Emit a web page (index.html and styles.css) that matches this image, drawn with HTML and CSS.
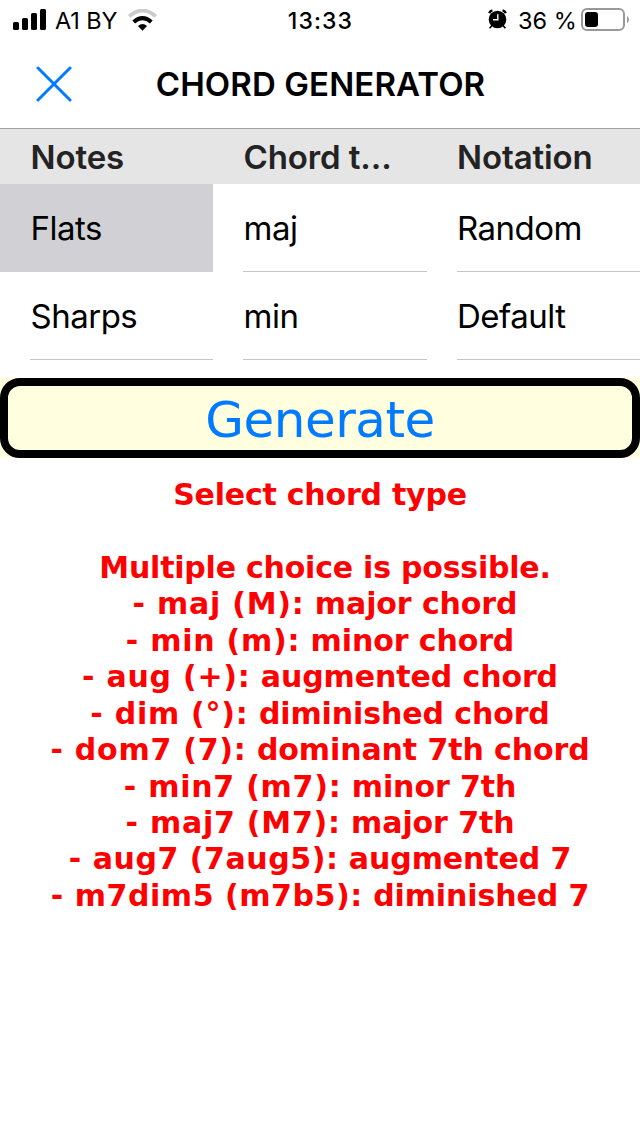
FILE: index.html
```html
<!DOCTYPE html>
<html lang="en">
<head>
<meta charset="utf-8">
<title>Chord Generator</title>
<link rel="stylesheet" href="styles.css">
</head>
<body>
<div class="status">
  <div class="status-left">
    <svg class="signal" width="34" height="22" viewBox="0 0 34 22"><rect x="0" y="13" width="6" height="8" rx="1.6"/><rect x="9" y="9" width="6" height="12" rx="1.6"/><rect x="18" y="4" width="6" height="17" rx="1.6"/><rect x="27" y="0" width="6" height="21" rx="1.6"/></svg>
    <span class="carrier">A1 BY</span>
    <svg class="wifi" width="30" height="22" viewBox="0 0 30 22"><path d="M1.2 7.4Q14.5-4.2 27.8 7.4" fill="none" stroke="#cbcbcb" stroke-width="3.6"/><path d="M5.7 12.9Q14.5 5.2 23.3 12.9" fill="none" stroke="#000" stroke-width="4"/><path d="M10 17Q14.5 13.2 19 17L14.5 21.7Z"/></svg>
  </div>
  <span class="time">13:33</span>
  <div class="status-right">
    <svg class="alarm" width="20" height="20" viewBox="0 0 20 20"><circle cx="9.5" cy="10.5" r="8.8"/><path d="M1.2 4.2Q2 2 4.4 1.4M17.8 4.2Q17 2 14.6 1.4" fill="none" stroke="#000" stroke-width="2.4"/><path d="M4 16.5L1.6 19.3M15 16.5L17.4 19.3" stroke="#000" stroke-width="1.6"/><path d="M9.8 5.2V10.8H5" fill="none" stroke="#fff" stroke-width="1.4"/></svg>
    <span class="percent">36 %</span>
    <svg class="battery" width="48" height="24" viewBox="0 0 48 24"><rect x="1" y="1" width="42" height="21" rx="5" fill="none" stroke="#999" stroke-width="2"/><rect x="4" y="4" width="13" height="15" rx="3"/><path d="M46 8Q48 9 48 11.5T46 15Z" fill="#999"/></svg>
  </div>
</div>
<header class="navbar">
  <svg class="close" width="36" height="36" viewBox="0 0 36 36"><path d="M2 2L34 34M34 2L2 34" stroke="#007aff" stroke-width="3" stroke-linecap="round"/></svg>
  <h1 class="title">CHORD GENERATOR</h1>
</header>
<main>
  <section class="lists">
    <div class="column"><h2 class="heading">Notes</h2><div class="row selected">Flats</div><div class="row">Sharps</div></div>
    <div class="column"><h2 class="heading">Chord t...</h2><div class="row">maj</div><div class="row">min</div></div>
    <div class="column"><h2 class="heading">Notation</h2><div class="row">Random</div><div class="row">Default</div></div>
  </section>
  <div class="action"><button class="generate">Generate</button></div>
  <section class="help">
    <p class="intro">Select chord type</p>
    <p>&nbsp;</p>
    <p class="intro trailing">Multiple choice is possible.</p>
    <p class="trailing"><span class="term">- maj (M):</span> major chord</p>
    <p><span class="term">- min (m):</span> minor chord</p>
    <p><span class="term">- aug (+):</span> augmented chord</p>
    <p><span class="term">- dim (°):</span> diminished chord</p>
    <p><span class="term">- dom7 (7):</span> dominant 7th chord</p>
    <p><span class="term">- min7 (m7):</span> minor 7th</p>
    <p><span class="term">- maj7 (M7):</span> major 7th</p>
    <p><span class="term long">- aug7 (7aug5):</span> augmented 7</p>
    <p><span class="term long">- m7dim5 (m7b5):</span> diminished 7</p>
  </section>
</main>
</body>
</html>
```
FILE: styles.css
```css
* { box-sizing: border-box; }
body { margin: 0; width: 640px; height: 1136px; background: #fff; color: #000; font-family: Inter, "Liberation Sans", sans-serif; overflow: hidden; }
svg { display: block; flex: none; }
h1, h2, p { margin: 0; }
.status { height: 40px; display: grid; grid-template-columns: 1fr auto 1fr; line-height: 41px; white-space: nowrap; }
.status-left { display: flex; padding-left: 13px; }
.signal { margin-top: 9px; }
.carrier { width: 64px; margin-left: 8px; font-size: 23.5px; letter-spacing: -0.1px; }
.wifi { margin: 9px 0 0 9px; }
.time { padding-left: 1px; font-weight: 500; font-size: 23px; line-height: 42px; letter-spacing: 1.1px; }
.status-right { display: flex; justify-content: flex-end; padding-right: 11px; }
.alarm { margin: 9px 10px 0 0; }
.percent { width: 58px; font-size: 23.5px; }
.battery { margin: 8px 0 0 5px; }
.navbar { height: 89px; display: grid; grid-template-columns: 120px 400px 120px; align-items: center; border-bottom: 1px solid #a0a0a0; }
.close { margin-left: 36px; }
.title { padding-left: 1px; text-align: center; font-size: 33px; font-weight: 600; line-height: 40px; white-space: nowrap; letter-spacing: 0.1px; }
.lists { display: grid; grid-template-columns: 213px 213.5px 213.5px; }
.column { white-space: nowrap; min-width: 0; }
.heading { height: 55px; padding-left: 30.5px; background: #e5e5e5; color: #232323; font-size: 33px; font-weight: 600; line-height: 56px; letter-spacing: -0.1px; }
.row { height: 88px; padding-left: 30.5px; font-size: 33px; line-height: 89px; letter-spacing: -0.5px; background: linear-gradient(#c5c5c7, #c5c5c7) 30px 87px / 100% 1px no-repeat; }
.row.selected { background: #d1d0d5; }
.action { margin-top: 18px; height: 80px; background: #ffffe0; }
.generate { display: block; width: 100%; height: 80px; padding: 5px 0 0; border: 8px solid #000; border-radius: 20px; background: #ffffe0; color: #007aff; font: 50px/59px "DejaVu Sans", sans-serif; letter-spacing: -0.5px; }
.help { padding-top: 18.9px; text-align: center; color: #f00; font: bold 30px/36.46px "DejaVu Sans", sans-serif; letter-spacing: -0.1px; white-space: nowrap; }
.intro { letter-spacing: -0.22px; }
.trailing { padding-left: 10px; }
.term { letter-spacing: 0.75px; }
.term.long { letter-spacing: 0.55px; }
```
